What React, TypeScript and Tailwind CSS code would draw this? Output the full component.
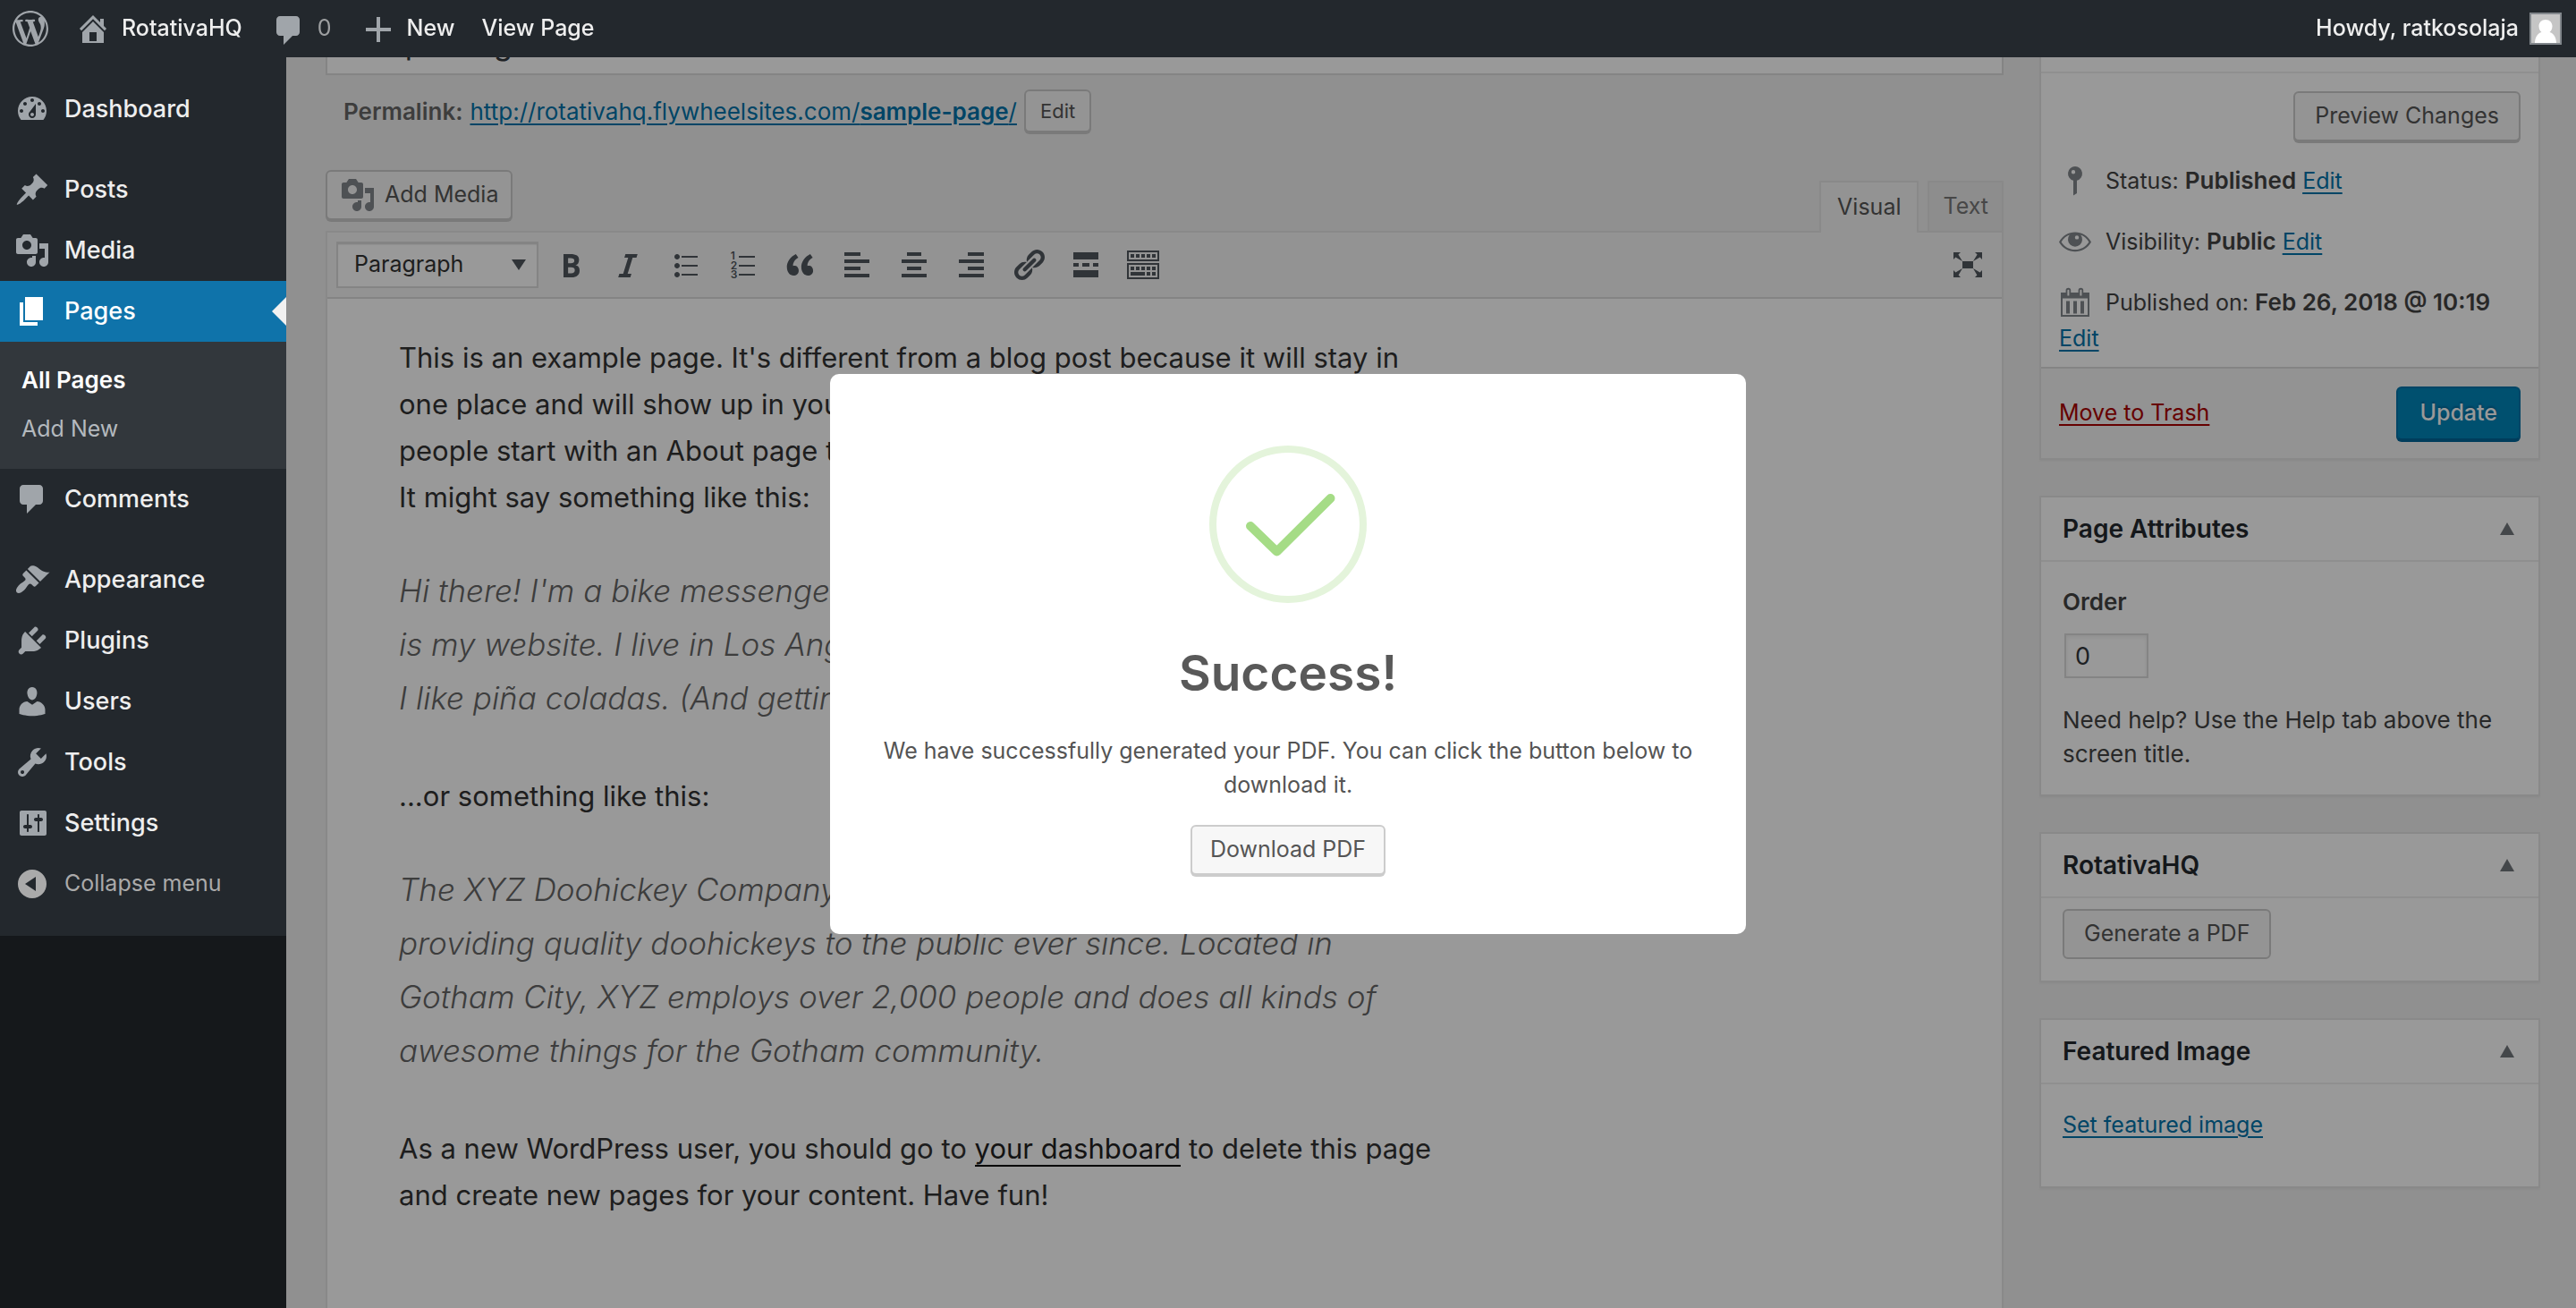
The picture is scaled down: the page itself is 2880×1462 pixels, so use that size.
import React from "react";

const paths = {
  wordpress:
    "M20 10c0-5.51-4.49-10-10-10C4.48 0 0 4.49 0 10c0 5.52 4.48 10 10 10 5.51 0 10-4.48 10-10zM7.78 15.37L4.37 6.22c.55-.02 1.17-.08 1.17-.08.5-.06.44-1.13-.06-1.11 0 0-1.45.11-2.37.11-.18 0-.37 0-.58-.01C4.12 2.69 6.87 1.11 10 1.11c2.33 0 4.45.87 6.05 2.34-.68-.11-1.65.39-1.65 1.58 0 .74.45 1.36.9 2.1.35.61.55 1.36.55 2.46 0 1.49-1.4 5-1.4 5l-3.03-8.37c.54-.02.82-.17.82-.17.5-.05.44-1.25-.06-1.22 0 0-1.44.12-2.38.12-.87 0-2.33-.12-2.33-.12-.5-.03-.56 1.2-.06 1.22l.92.08 1.26 3.41zM17.41 10c.24-.64.74-1.87.43-4.25.7 1.29 1.05 2.71 1.05 4.25 0 3.29-1.73 6.24-4.4 7.78.97-2.59 1.94-5.2 2.92-7.78zM6.1 18.09C3.12 16.65 1.11 13.53 1.11 10c0-1.3.23-2.48.72-3.59C3.25 10.3 4.67 14.2 6.1 18.09zm4.03-6.63l2.58 6.98c-.86.29-1.76.45-2.71.45-.79 0-1.57-.11-2.29-.33.81-2.38 1.62-4.74 2.42-7.1z",
  home: "M16 8.5l1.53 1.53-1.06 1.06L10 4.6l-6.47 6.49-1.06-1.06L10 2.5l4 4v-2h2v4zm-6-2.46l6 5.99V18H4v-5.97zM12 17v-5H8v5h4z",
  plus: "M17 9v2h-6v6H9v-6H3V9h6V3h2v6h6z",
  dashboard:
    "M3.76 16h12.48c1.1-1.37 1.76-3.11 1.76-5 0-4.42-3.58-8-8-8s-8 3.58-8 8c0 1.89.66 3.63 1.76 5zM10 4c.55 0 1 .45 1 1s-.45 1-1 1-1-.45-1-1 .45-1 1-1zM6 6c.55 0 1 .45 1 1s-.45 1-1 1-1-.45-1-1 .45-1 1-1zm8 0c.55 0 1 .45 1 1s-.45 1-1 1-1-.45-1-1 .45-1 1-1zm-5.37 5.55L12 7v6c0 1.1-.9 2-2 2s-2-.9-2-2c0-.57.24-1.08.63-1.45zM4 10c.55 0 1 .45 1 1s-.45 1-1 1-1-.45-1-1 .45-1 1-1zm12 0c.55 0 1 .45 1 1s-.45 1-1 1-1-.45-1-1 .45-1 1-1zm-5 3c0-.55-.45-1-1-1s-1 .45-1 1 .45 1 1 1 1-.45 1-1z",
  post: "M10.44 3.02l1.82-1.82 6.36 6.35-1.83 1.82c-1.05-.68-2.48-.57-3.41.36l-.75.75c-.92.93-1.04 2.35-.35 3.41l-1.83 1.82-2.41-2.41-2.8 2.79c-.42.42-3.38 2.71-3.8 2.29s1.86-3.39 2.28-3.81l2.79-2.79L4.1 9.36l1.83-1.82c1.05.69 2.48.57 3.4-.36l.75-.75c.93-.92 1.05-2.35.36-3.41z",
  media:
    "M13 11V4c0-.55-.45-1-1-1h-1.67L9 1H5L3.67 3H2c-.55 0-1 .45-1 1v7c0 .55.45 1 1 1h10c.55 0 1-.45 1-1zM7 4.5c1.38 0 2.5 1.12 2.5 2.5S8.38 9.5 7 9.5 4.5 8.38 4.5 7 5.62 4.5 7 4.5zM14 6h5v10.5c0 1.38-1.12 2.5-2.5 2.5S14 17.88 14 16.5s1.12-2.5 2.5-2.5c.17 0 .34.02.5.05V9h-3V6zm-4 8.05V13h2v3.5c0 1.38-1.12 2.5-2.5 2.5S7 17.88 7 16.5 8.12 14 9.5 14c.17 0 .34.02.5.05z",
  page: "M6 15V2h10v13H6zm-1 1h8v2H3V5h2v11z",
  comments:
    "M5 2h9c1.1 0 2 .9 2 2v7c0 1.1-.9 2-2 2h-2l-5 5v-5H5c-1.1 0-2-.9-2-2V4c0-1.1.9-2 2-2z",
  appearance:
    "M14.48 11.06L7.41 3.99l1.5-1.5c.5-.56 2.3-.47 3.51.32 1.21.8 1.43 1.28 2.91 2.1 1.18.64 2.45 1.26 4.45.85zm-.71.71L6.7 4.7 4.93 6.47c-.39.39-.39 1.02 0 1.41l1.06 1.06c.39.39.39 1.03 0 1.42-.6.6-1.43 1.11-2.21 1.69-.35.26-.7.53-1.01.84C1.43 14.23.4 16.08 1.4 17.07c.99 1 2.84-.03 4.18-1.36.31-.31.58-.66.85-1.02.57-.78 1.08-1.61 1.69-2.21.39-.39 1.02-.39 1.41 0l1.06 1.06c.39.39 1.02.39 1.41 0z",
  plugins:
    "M13.11 4.36L9.87 7.6 8 5.73l3.24-3.24c.35-.34 1.05-.2 1.56.32.52.51.66 1.21.31 1.55zm-8 1.77l.91-1.12 9.01 9.01-1.19.84c-.71.71-2.63 1.16-3.82 1.16H6.14L4.9 17.26c-.59.59-1.54.59-2.12 0-.59-.58-.59-1.53 0-2.12l1.24-1.24v-3.88c0-1.13.4-3.19 1.09-3.89zm7.26 3.97l3.24-3.24c.34-.35 1.04-.21 1.55.31.52.51.66 1.21.31 1.55l-3.24 3.25z",
  users:
    "M10 9.25c-2.27 0-2.73-3.44-2.73-3.44C7 4.02 7.82 2 9.97 2c2.16 0 2.98 2.02 2.71 3.81 0 0-.41 3.44-2.68 3.44zm0 2.57L12.72 10c2.39 0 4.52 2.33 4.52 4.53v2.49s-3.65 1.13-7.24 1.13c-3.65 0-7.24-1.13-7.24-1.13v-2.49c0-2.25 1.94-4.48 4.47-4.48z",
  tools:
    "M16.68 9.77c-1.34 1.34-3.3 1.67-4.95.99l-5.41 6.52c-.99.99-2.59.99-3.58 0s-.99-2.59 0-3.57l6.52-5.42c-.68-1.65-.35-3.61.99-4.95 1.28-1.28 3.12-1.62 4.72-1.06l-2.89 2.89 2.82 2.82 2.86-2.87c.53 1.58.18 3.39-1.08 4.65zM3.81 16.21c.4.39 1.04.39 1.43 0 .4-.4.4-1.04 0-1.43-.39-.4-1.03-.4-1.43 0-.39.39-.39 1.03 0 1.43z",
  settings:
    "M18 16V4c0-.55-.45-1-1-1H4c-.55 0-1 .45-1 1v12c0 .55.45 1 1 1H17c.55 0 1-.45 1-1zM8 11h1c.55 0 1 .45 1 1s-.45 1-1 1H8v1.5c0 .28-.22.5-.5.5s-.5-.22-.5-.5V13H6c-.55 0-1-.45-1-1s.45-1 1-1h1V5.5c0-.28.22-.5.5-.5s.5.22.5.5V11zm5-2h-1c-.55 0-1-.45-1-1s.45-1 1-1h1V5.5c0-.28.22-.5.5-.5s.5.22.5.5V7h1c.55 0 1 .45 1 1s-.45 1-1 1h-1v5.5c0 .28-.22.5-.5.5s-.5-.22-.5-.5V9z",
  collapse: "M10 2a8 8 0 1 0 0 16 8 8 0 0 0 0-16zM12 6v8l-6-4z",
  bold: "M6 4v13h4.54c1.37 0 2.46-.33 3.26-1 .8-.66 1.2-1.58 1.2-2.77 0-.84-.17-1.51-.51-2.01s-.9-.85-1.67-1.03v-.09c.57-.1 1.02-.4 1.36-.9s.51-1.13.51-1.91c0-1.14-.39-1.98-1.17-2.5C12.75 4.26 11.5 4 9.78 4H6zm2.57 5.15V6.26h1.36c.73 0 1.27.11 1.61.32.34.22.51.58.51 1.07 0 .54-.16.92-.47 1.15s-.82.35-1.51.35h-1.5zm0 2.19h1.6c1.44 0 2.16.53 2.16 1.61 0 .6-.17 1.05-.51 1.34s-.86.43-1.57.43H8.57v-3.38z",
  italic: "M14.78 6h-2.13l-2.8 9h2.12l-.62 2H4.6l.62-2h2.14l2.8-9H8.03l.62-2h6.75z",
  ul: "M5.5 7C4.67 7 4 6.33 4 5.5 4 4.68 4.67 4 5.5 4 6.32 4 7 4.68 7 5.5 7 6.33 6.32 7 5.5 7zM8 5h9v1H8V5zm-2.5 7c-.83 0-1.5-.67-1.5-1.5C4 9.68 4.67 9 5.5 9c.82 0 1.5.68 1.5 1.5 0 .83-.68 1.5-1.5 1.5zM8 10h9v1H8v-1zm-2.5 7c-.83 0-1.5-.67-1.5-1.5 0-.82.67-1.5 1.5-1.5.82 0 1.5.68 1.5 1.5 0 .83-.68 1.5-1.5 1.5zM8 15h9v1H8v-1z",
  quote:
    "M9.49 13.22c0-.74-.2-1.38-.61-1.9-.62-.78-1.83-.88-2.53-.72-.29-1.65 1.11-3.75 2.92-4.65L7.88 4c-2.73 1.3-5.42 4.28-4.96 8.05C3.21 14.43 4.59 16 6.54 16c.85 0 1.56-.25 2.12-.75s.83-1.18.83-2.03zm8.05 0c0-.74-.2-1.38-.61-1.9-.63-.78-1.83-.88-2.53-.72-.29-1.65 1.11-3.75 2.92-4.65L15.93 4c-2.73 1.3-5.41 4.28-4.95 8.05.29 2.38 1.66 3.95 3.61 3.95.85 0 1.56-.25 2.12-.75s.83-1.18.83-2.03z",
  left: "M12 5V3H3v2h9zm5 4V7H3v2h14zm-5 4v-2H3v2h9zm5 4v-2H3v2h14z",
  center: "M14 5V3H6v2h8zm3 4V7H3v2h14zm-3 4v-2H6v2h8zm3 4v-2H3v2h14z",
  right: "M17 5V3H8v2h9zm0 4V7H3v2h14zm0 4v-2H8v2h9zm0 4v-2H3v2h14z",
  link: "M17.74 2.76c1.68 1.69 1.68 4.41 0 6.1l-1.53 1.52c-1.12 1.12-2.7 1.47-4.14 1.09l2.62-2.61.76-.77.76-.76c.84-.84.84-2.2 0-3.04-.84-.85-2.2-.85-3.04 0l-.77.76-3.38 3.38c-.37-1.44-.02-3.02 1.1-4.14l1.52-1.53c1.69-1.68 4.42-1.68 6.1 0zM8.59 13.43l5.34-5.34c.42-.42.42-1.1 0-1.52-.44-.43-1.13-.39-1.53 0l-5.33 5.34c-.42.42-.42 1.1 0 1.52.44.43 1.13.39 1.52 0zm-.76 2.29l4.14-4.15c.38 1.44.03 3.02-1.09 4.14l-1.52 1.53c-1.69 1.68-4.41 1.68-6.1 0-1.68-1.68-1.68-4.42 0-6.1l1.53-1.52c1.12-1.12 2.7-1.47 4.14-1.1l-4.14 4.15c-.85.84-.85 2.2 0 3.05.84.84 2.2.84 3.04 0z",
  more: "M17 7V3H3v4h14zM6 11V9H3v2h3zm6 0V9H8v2h4zm5 0V9h-3v2h3zm0 6v-4H3v4h14z",
  sink: "M19 2v6H1V2h18zm-1 5V3H2v4h16zM5 4v2H3V4h2zm3 0v2H6V4h2zm3 0v2H9V4h2zm3 0v2h-2V4h2zm3 0v2h-2V4h2zm2 5v9H1V9h18zm-1 8v-7H2v7h16zM5 11v2H3v-2h2zm3 0v2H6v-2h2zm3 0v2H9v-2h2zm3 0v2h-2v-2h2zm3 0v2h-2v-2h2zm-6 3v2H3v-2h8zm3 0v2h-2v-2h2zm3 0v2h-2v-2h2z",
  expand:
    "M7 8h6v4H7zM2 13v4h4l-1.2-1.2L7 12l-3.8 2.2zM14 17h4v-4l-1.2 1.2L13 12l2.2 3.8zM14 3l1.3 1.3L13 8l3.8-2.2L18 7V3zM6 3H2v4l1.2-1.2L7 8 4.7 4.3z",
  pin: "M9 2a4 4 0 0 1 1 7.87V17l-2 1.2V9.87A4 4 0 0 1 9 2zM8 4a1.1 1.1 0 1 0 0 2.2A1.1 1.1 0 0 0 8 4z",
  eye: "M0 10.2C2 6.6 5.4 4.7 9 4.7s7 1.9 9 5.5c-2 3.5-5.4 5.4-9 5.4s-7-1.9-9-5.4zm1.3 0c1.8 2.8 4.6 4.3 7.7 4.3s5.9-1.5 7.7-4.3C15.6 8.3 14 7 12.1 6.3a4 4 0 1 1-6.2 0C4 7 2.4 8.3 1.3 10.2zM10 6.6a1.1 1.1 0 1 0 0 2.2 1.1 1.1 0 0 0 0-2.2z",
  calendar:
    "M1 4.5h2.8V3.3a1.4 1.4 0 0 1 2.8 0v1.2h4.2V3.3a1.4 1.4 0 0 1 2.8 0v1.2H17V18H1zm1 3.3V17h14V7.8zM4.7 3.4v2.9h1V3.4a.5.5 0 0 0-1 0zm7 0v2.9h1V3.4a.5.5 0 0 0-1 0zM4 9.3h2v6.9H4zm4 0h2v6.9H8zm4 0h2v6.9h-2z",
} as const;

type IconName = keyof typeof paths;

function Icon({ name, className = "" }: { name: IconName; className?: string }) {
  return (
    <svg viewBox="0 0 20 20" className={`size-10 shrink-0 fill-current ${className}`} fillRule="evenodd" aria-hidden="true">
      <path d={paths[name]} />
    </svg>
  );
}

function NumberedListIcon() {
  return (
    <svg viewBox="0 0 20 20" className="size-10 shrink-0 fill-current" aria-hidden="true">
      <path d="M8 5h9v1H8zM8 10h9v1H8zM8 15h9v1H8z" />
      <g fontFamily="Inter, sans-serif" fontSize="6" fontWeight="600">
        <text x="3.4" y="7.2">1</text>
        <text x="3.4" y="12.5">2</text>
        <text x="3.4" y="17.6">3</text>
      </g>
    </svg>
  );
}

function MenuItem({ icon, label, current = false }: { icon: IconName; label: string; current?: boolean }) {
  return (
    <a
      href="#"
      aria-current={current ? "page" : undefined}
      className={`relative flex h-17 items-center gap-4 px-4 text-[27px] font-medium ${
        current ? "bg-[#0f73aa] text-white" : "text-[#eeeeee]"
      }`}
    >
      <Icon name={icon} className={current ? "" : "text-[#a0a5aa]"} />
      {label}
      {current && (
        <svg viewBox="0 0 16 32" className="absolute top-[18px] right-0 h-8 w-4 fill-[#f1f1f1]" aria-hidden="true">
          <path d="M16 0v32L0 16z" />
        </svg>
      )}
    </a>
  );
}

function Button({ className = "", children }: { className?: string; children: React.ReactNode }) {
  return (
    <button
      type="button"
      className={`flex items-center justify-center rounded-md border-2 border-[#cccccc] bg-[#f7f7f7] text-[#555555] ${className}`}
    >
      {children}
    </button>
  );
}

function Link({ className = "text-[#0073aa]", children }: { className?: string; children: React.ReactNode }) {
  return (
    <a href="#" className={`underline decoration-2 underline-offset-4 ${className}`}>
      {children}
    </a>
  );
}

function Panel({ title, children }: { title?: string; children: React.ReactNode }) {
  return (
    <section className="border-2 border-[#e5e5e5] bg-white shadow-[0_2px_2px_rgba(0,0,0,0.04)]">
      <header className="flex h-18 items-center justify-between border-b-2 border-[#eeeeee] pr-[27px] pl-6">
        <h2 className="text-[28px] leading-10 font-semibold text-[#23282d]">{title}</h2>
        <button type="button" aria-label="Toggle panel">
          <svg viewBox="0 0 16 14" className="h-3.5 w-4 fill-[#72777c]" aria-hidden="true">
            <path d="M8 0l8 14H0z" />
          </svg>
        </button>
      </header>
      {children}
    </section>
  );
}

function AdminBar() {
  return (
    <header className="fixed inset-x-0 top-0 z-20 flex h-16 items-center justify-between bg-[#23282d] pr-4 pl-3.5 text-[25px] font-medium text-[#eeeeee]">
      <nav className="flex items-center" aria-label="Toolbar">
        <a href="#" aria-label="About WordPress">
          <Icon name="wordpress" className="text-[#a0a5aa]" />
        </a>
        <a href="#" className="ml-[30px] flex items-center gap-3">
          <Icon name="home" className="text-[#a0a5aa]" />
          RotativaHQ
        </a>
        <a href="#" className="ml-8 flex items-center gap-3 font-normal text-[#9d9fa1]">
          <Icon name="comments" className="mt-1 text-[#a0a5aa]" />0
        </a>
        <a href="#" className="ml-8 flex items-center gap-3">
          <Icon name="plus" className="mt-0.5 text-[#a0a5aa]" />
          New
        </a>
        <a href="#" className="ml-[30px]">
          View Page
        </a>
      </nav>
      <a href="#" className="flex items-center gap-3">
        Howdy, ratkosolaja
        <svg viewBox="0 0 36 36" className="size-9" aria-hidden="true">
          <path fill="#82878c" d="M0 0h36v36H0z" />
          <path fill="#c5c5c5" d="M2 2h32v32H2z" />
          <path
            fill="#fff"
            d="M18 8c4.5 0 7.500 3.200 7.500 7.300 0 2.900-1.200 5.200-3 6.700C27 23 30 28.500 30 34H6c0-5.500 3-11 7.500-12-1.800-1.500-3-3.800-3-6.700C10.500 11.200 13.500 8 18 8z"
          />
        </svg>
      </a>
    </header>
  );
}

function AdminMenu() {
  return (
    <aside className="w-80 shrink-0 bg-[#23282d] pt-16">
      <nav className="relative z-20 bg-[#23282d] pt-6 pb-6" aria-label="Main menu">
        <MenuItem icon="dashboard" label="Dashboard" />
        <div className="mt-[22px]">
          <MenuItem icon="post" label="Posts" />
          <MenuItem icon="media" label="Media" />
          <MenuItem icon="page" label="Pages" current />
        </div>
        <div className="bg-[#32373c] px-6 pt-3.5 pb-4 text-[25px]">
          <a href="#" className="flex h-14 items-center text-[26px] font-semibold text-white">
            All Pages
          </a>
          <a href="#" className="flex h-14 items-center text-[#b4b9be]">
            Add New
          </a>
        </div>
        <MenuItem icon="comments" label="Comments" />
        <div className="mt-[22px]">
          <MenuItem icon="appearance" label="Appearance" />
          <MenuItem icon="plugins" label="Plugins" />
          <MenuItem icon="users" label="Users" />
          <MenuItem icon="tools" label="Tools" />
          <MenuItem icon="settings" label="Settings" />
        </div>
        <button type="button" className="flex h-17 w-full items-center gap-4 px-4 text-[25px] text-[#aaaaaa]">
          <Icon name="collapse" />
          Collapse menu
        </button>
      </nav>
    </aside>
  );
}

const tools: [IconName | "ol", string][] = [
  ["bold", "Bold"],
  ["italic", "Italic"],
  ["ul", "Bulleted list"],
  ["ol", "Numbered list"],
  ["quote", "Blockquote"],
  ["left", "Align left"],
  ["center", "Align center"],
  ["right", "Align right"],
  ["link", "Insert link"],
  ["more", "Read more"],
  ["sink", "Toolbar toggle"],
];

function Editor() {
  return (
    <div className="flex min-w-0 flex-1 flex-col">
      <input
        aria-label="Title"
        defaultValue="Sample Page"
        className="h-19 w-full border-2 border-[#dddddd] bg-white px-4 pt-1 text-[34px] text-[#32373c]"
      />
      <div className="mt-4 flex h-12 items-center pl-5 text-[26px] text-[#666666]">
        <strong className="mr-2 font-semibold">Permalink:</strong>
        <Link>
          http://rotativahq.flywheelsites.com/<strong className="font-semibold">sample-page</strong>/
        </Link>
        <Button className="ml-2 h-12 px-4 text-[22px] shadow-[0_2px_0_#cccccc]">Edit</Button>
      </div>
      <div className="mt-[42px] flex h-17 justify-between text-[25px]">
        <Button className="h-14 gap-2.5 pr-3.5 pl-3.5 shadow-[0_2px_0_#cccccc]">
          <Icon name="media" className="text-[#82878c]" />
          Add Media
        </Button>
        <div className="flex items-end gap-2.5">
          <button
            type="button"
            className="relative -mb-0.5 h-[58px] border-2 border-b-0 border-[#e5e5e5] bg-[#f5f5f5] px-[18px] text-[#555555]"
          >
            Visual
          </button>
          <button type="button" className="h-14 border-2 border-b-0 border-[#e5e5e5] bg-[#ebebeb] px-[15px] text-[#777777]">
            Text
          </button>
        </div>
      </div>
      <div className="flex-1 border-2 border-b-0 border-[#e5e5e5] bg-white">
        <div className="flex h-[74px] items-center border-b-2 border-[#dddddd] bg-[#f5f5f5] pr-1.5 pl-2.5 text-[#50575e]">
          <div className="relative mr-1">
            <select
              aria-label="Block format"
              className="h-13 w-[226px] appearance-none border-2 border-[#dddddd] bg-white pl-[18px] text-[25px] text-[#333333] shadow-[inset_0_2px_2px_-1px_rgba(0,0,0,0.2)]"
            >
              <option>Paragraph</option>
            </select>
            <svg viewBox="0 0 16 12" className="pointer-events-none absolute top-5 right-[14px] h-3 w-4 fill-current" aria-hidden="true">
              <path d="M0 0h16L8 12z" />
            </svg>
          </div>
          {tools.map(([name, label]) => (
            <button key={name} type="button" aria-label={label} className="flex w-16 justify-center">
              {name === "ol" ? <NumberedListIcon /> : <Icon name={name} />}
            </button>
          ))}
          <button type="button" aria-label="Distraction-free writing mode" className="ml-auto flex w-16 justify-center">
            <Icon name="expand" />
          </button>
        </div>
        <article className="max-w-[1300px] pt-10 pl-20 text-[31px] leading-[52px] text-[#333333]">
          <p>
            This is an example page. It's different from a blog post because it will stay in
            <br />
            one place and will show up in your site navigation (in most themes). Most
            <br />
            people start with an About page that introduces them to potential site visitors.
            <br />
            It might say something like this:
          </p>
          <blockquote className="mt-12 mb-[54px] text-[35px] leading-[60px] font-light text-[#666666] italic">
            Hi there! I'm a bike messenger by day, aspiring actor by night, and this
            <br />
            is my website. I live in Los Angeles, have a great dog named Jack, and
            <br />I like piña coladas. (And gettin' caught in the rain.)
          </blockquote>
          <p>...or something like this:</p>
          <blockquote className="mt-12 mb-[54px] text-[35px] leading-[60px] font-light text-[#666666] italic">
            The XYZ Doohickey Company was founded in 1971, and has been
            <br />
            providing quality doohickeys to the public ever since. Located in
            <br />
            Gotham City, XYZ employs over 2,000 people and does all kinds of
            <br />
            awesome things for the Gotham community.
          </blockquote>
          <p>
            As a new WordPress user, you should go to{" "}
            <a href="#" className="border-b-2 border-black text-[#222222]">
              your dashboard
            </a>{" "}
            to delete this page
            <br />
            and create new pages for your content. Have fun!
          </p>
        </article>
      </div>
    </div>
  );
}

function Sidebar() {
  return (
    <div className="flex w-[560px] shrink-0 flex-col gap-10 text-[25px] text-[#444444]">
      <Panel title="Publish">
        <div className="px-5 pt-5 pb-3">
          <div className="flex justify-end">
            <Button className="h-14 px-[22px] shadow-[0_2px_0_#cccccc]">Preview Changes</Button>
          </div>
          <div className="mt-6 flex h-10 items-center">
            <Icon name="pin" className="mr-3 text-[#82878c]" />
            <p>
              Status: <strong className="text-[26px] font-semibold">Published</strong> <Link>Edit</Link>
            </p>
          </div>
          <div className="mt-7 flex h-10 items-center">
            <Icon name="eye" className="mr-3 text-[#82878c]" />
            <p>
              Visibility: <strong className="text-[26px] font-semibold">Public</strong> <Link>Edit</Link>
            </p>
          </div>
          <div className="mt-7 flex flex-wrap items-center leading-10">
            <Icon name="calendar" className="mr-3 text-[#82878c]" />
            <p className="whitespace-nowrap">
              Published on: <strong className="text-[26px] font-semibold">Feb 26, 2018 @ 10:19</strong>
            </p>
            <p className="w-full">
              <Link>Edit</Link>
            </p>
          </div>
        </div>
        <footer className="flex items-center justify-between border-t-2 border-[#dddddd] bg-[#f5f5f5] p-5">
          <Link className="text-[#aa0000]">Move to Trash</Link>
          <button
            type="button"
            className="h-15 rounded-md border-2 border-[#0073aa] border-b-[#006799] bg-[#0085ba] px-6 font-medium text-white shadow-[0_2px_0_#006799] text-shadow-[0_-2px_2px_#006799]"
          >
            Update
          </button>
        </footer>
      </Panel>
      <Panel title="Page Attributes">
        <div className="px-6 py-[26px] text-[26px] leading-[38px]">
          <label htmlFor="order" className="block font-semibold">
            Order
          </label>
          <input
            id="order"
            defaultValue="0"
            className="mt-4 ml-0.5 block h-[50px] w-[94px] border-2 border-[#dddddd] bg-white px-2.5 text-[27px] text-[#32373c] shadow-[inset_0_2px_4px_rgba(0,0,0,0.07)]"
          />
          <p className="mt-7">Need help? Use the Help tab above the screen title.</p>
        </div>
      </Panel>
      <Panel title="RotativaHQ">
        <div className="px-6 pt-3 pb-6">
          <Button className="h-14 px-[22px]">Generate a PDF</Button>
        </div>
      </Panel>
      <Panel title="Featured Image">
        <div className="px-6 pt-[26px] pb-[50px] leading-[38px]">
          <Link>Set featured image</Link>
        </div>
      </Panel>
    </div>
  );
}

function SuccessDialog() {
  return (
    <div className="fixed inset-0 z-10 flex items-center justify-center bg-black/40">
      <div
        role="dialog"
        aria-modal="true"
        aria-labelledby="dialog-title"
        className="flex w-[1024px] flex-col items-center rounded-[10px] bg-white px-10 pt-20 pb-16 text-center text-[25px] text-[#545454]"
      >
        <svg viewBox="0 0 176 176" className="size-44" fill="none" aria-hidden="true">
          <circle cx="88" cy="88" r="84" stroke="#e4f4db" strokeWidth="8" />
          <path d="M46 90l29.5 28.5L135.5 59" stroke="#a5dc86" strokeWidth="10" strokeLinecap="round" strokeLinejoin="round" />
        </svg>
        <h2 id="dialog-title" className="mt-[46px] text-[55px] leading-16 font-semibold text-[#595959]">
          Success!
        </h2>
        <p className="mt-9 leading-[38px]">
          We have successfully generated your PDF. You can click the button below to download it.
        </p>
        <Button className="mt-[26px] mb-0.5 h-14 px-5 shadow-[0_2px_0_#cccccc]">Download PDF</Button>
      </div>
    </div>
  );
}

export default function App() {
  return (
    <div className="flex min-h-screen bg-[#f1f1f1] font-[Inter,sans-serif]">
      <AdminBar />
      <AdminMenu />
      <main className="flex min-w-0 flex-1 gap-10 pt-2 pr-10 pl-11">
        <Editor />
        <Sidebar />
      </main>
      <SuccessDialog />
    </div>
  );
}
